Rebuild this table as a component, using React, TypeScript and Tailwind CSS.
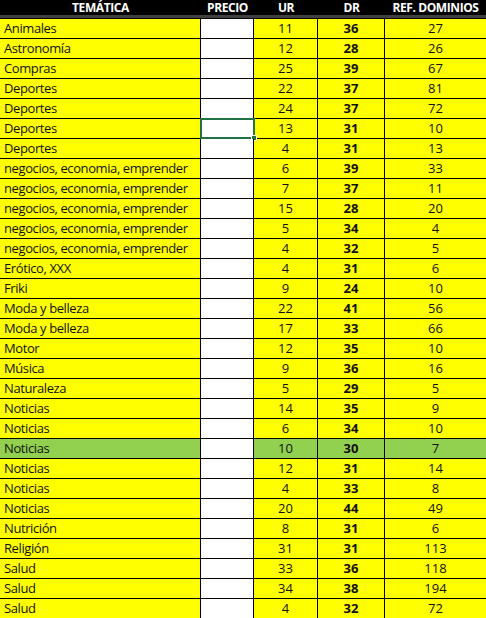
const rows: [string, number, number, number, boolean?][] = [
  ["Animales", 11, 36, 27],
  ["Astronomía", 12, 28, 26],
  ["Compras", 25, 39, 67],
  ["Deportes", 22, 37, 81],
  ["Deportes", 24, 37, 72],
  ["Deportes", 13, 31, 10],
  ["Deportes", 4, 31, 13],
  ["negocios, economia, emprender", 6, 39, 33],
  ["negocios, economia, emprender", 7, 37, 11],
  ["negocios, economia, emprender", 15, 28, 20],
  ["negocios, economia, emprender", 5, 34, 4],
  ["negocios, economia, emprender", 4, 32, 5],
  ["Erótico, XXX", 4, 31, 6],
  ["Friki", 9, 24, 10],
  ["Moda y belleza", 22, 41, 56],
  ["Moda y belleza", 17, 33, 66],
  ["Motor", 12, 35, 10],
  ["Música", 9, 36, 16],
  ["Naturaleza", 5, 29, 5],
  ["Noticias", 14, 35, 9],
  ["Noticias", 6, 34, 10],
  ["Noticias", 10, 30, 7, true],
  ["Noticias", 12, 31, 14],
  ["Noticias", 4, 33, 8],
  ["Noticias", 20, 44, 49],
  ["Nutrición", 8, 31, 6],
  ["Religión", 31, 31, 113],
  ["Salud", 33, 36, 118],
  ["Salud", 34, 38, 194],
  ["Salud", 4, 32, 72],
];

const cols = "grid grid-cols-[201px_53px_64px_67px_101px]";

export default function App() {
  return (
    <div
      className="w-[486px] h-[618px] overflow-hidden bg-white text-[13px] leading-none text-[#111]"
      style={{ fontFamily: '"Open Sans", "Noto Sans", sans-serif' }}
    >
      {/* header */}
      <div className="bg-black border-b-[3px] border-b-[#404040]">
        <div className={`${cols} h-[15px] text-white font-bold text-[12px] leading-[15px] tracking-[-0.4px]`}>
          <div className="text-center">TEMÁTICA</div>
          <div className="text-center">PRECIO</div>
          <div className="text-center">UR</div>
          <div className="text-center">DR</div>
          <div className="text-center">REF. DOMINIOS</div>
        </div>
      </div>
      <div className="border-t border-black">
        {rows.map(([name, ur, dr, ref, green], i) => {
          const bg = green ? "bg-[#92d050]" : "bg-[#ffff00]";
          return (
            <div key={i} className={`${cols} h-[20px] border-b border-black`}>
              <div className={`${bg} border-r border-black flex items-center pl-[4px] tracking-[-0.4px] whitespace-nowrap`}>
                {name}
              </div>
              <div className="relative bg-white border-r border-black">
                {i === 5 && (
                  <div className="absolute -left-px -top-px w-[55px] h-[21px] border-2 border-[#217346]">
                    <div className="absolute -right-[4px] -bottom-[4px] w-[6px] h-[6px] bg-[#217346] border border-white" />
                  </div>
                )}
              </div>
              <div className={`${bg} border-r border-black flex items-center justify-center`}>{ur}</div>
              <div className={`${bg} border-r border-black flex items-center justify-center font-bold`}>{dr}</div>
              <div className={`${bg} flex items-center justify-center`}>{ref}</div>
            </div>
          );
        })}
      </div>
    </div>
  );
}
